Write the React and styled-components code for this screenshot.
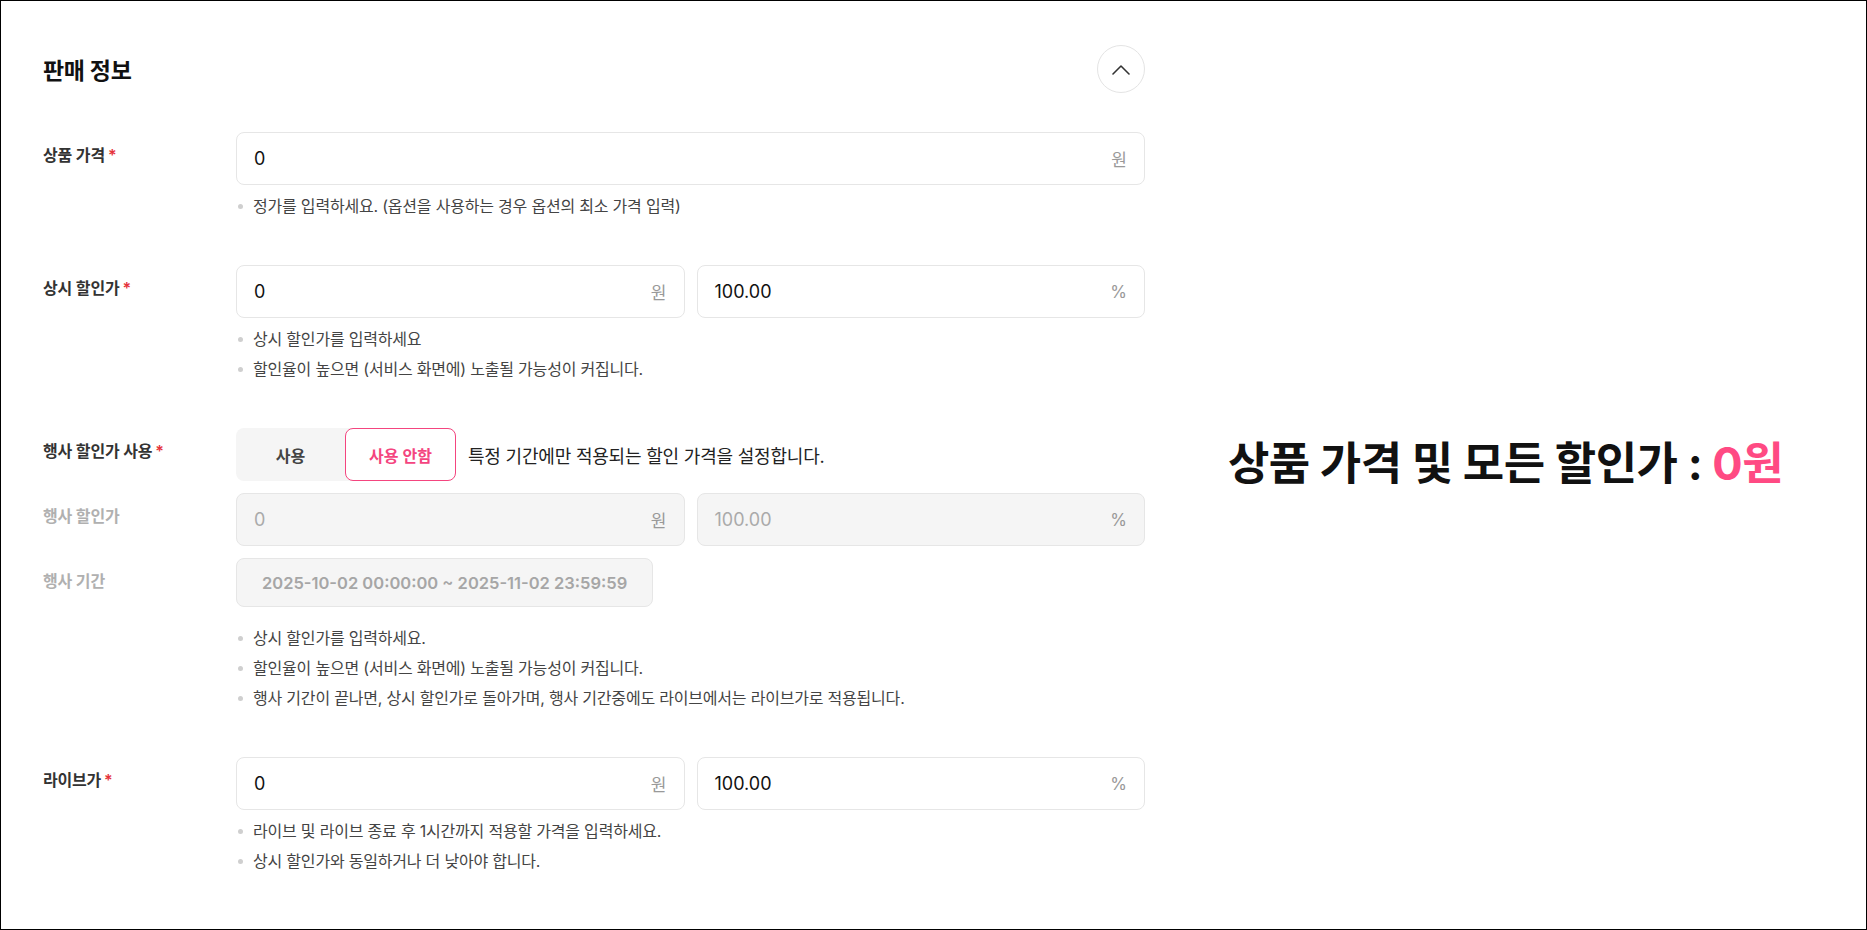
import React from "react";
import styled, { createGlobalStyle } from "styled-components";

const GlobalStyle = createGlobalStyle`
  * {
    box-sizing: border-box;
  }
  body {
    margin: 0;
    background: #fff;
    font-family: Inter, "Noto Sans CJK KR", "Noto Sans", sans-serif;
    color: #111;
  }
`;

const PINK = "#f4457f";

function ChevronUp() {
  return (
    <svg width="18" height="11" viewBox="0 0 18 11" fill="none">
      <path
        d="M1 10 L9 2 L17 10"
        stroke="#333"
        strokeWidth="1.6"
        strokeLinecap="round"
        strokeLinejoin="round"
      />
    </svg>
  );
}

function PriceInput({ value, unit, disabled }) {
  return (
    <InputBox $disabled={disabled}>
      <Value $disabled={disabled}>{value}</Value>
      <Unit>{unit}</Unit>
    </InputBox>
  );
}

function HelpText({ items, $top }) {
  return (
    <HelpList $top={$top}>
      {items.map((t) => (
        <HelpItem key={t}>
          <Dot />
          <span>{t}</span>
        </HelpItem>
      ))}
    </HelpList>
  );
}

export default function App() {
  return (
    <>
      <GlobalStyle />
      <Page>
        <FormPanel>
          <Header>
            <Title>판매 정보</Title>
            <CollapseButton type="button" aria-label="접기">
              <ChevronUp />
            </CollapseButton>
          </Header>

          <FieldRow>
            <Label>
              상품 가격<Required>*</Required>
            </Label>
            <FieldColumn>
              <PriceInput value="0" unit="원" />
              <HelpText
                items={["정가를 입력하세요. (옵션을 사용하는 경우 옵션의 최소 가격 입력)"]}
              />
            </FieldColumn>
          </FieldRow>

          <FieldRow>
            <Label>
              상시 할인가<Required>*</Required>
            </Label>
            <FieldColumn>
              <InputPair>
                <PriceInput value="0" unit="원" />
                <PriceInput value="100.00" unit="%" />
              </InputPair>
              <HelpText
                items={[
                  "상시 할인가를 입력하세요",
                  "할인율이 높으면 (서비스 화면에) 노출될 가능성이 커집니다.",
                ]}
              />
            </FieldColumn>
          </FieldRow>

          <FieldRow $tight>
            <Label>
              행사 할인가 사용<Required>*</Required>
            </Label>
            <ToggleLine>
              <SegmentGroup>
                <Segment type="button">사용</Segment>
                <Segment type="button" $active>
                  사용 안함
                </Segment>
              </SegmentGroup>
              <ToggleDesc>특정 기간에만 적용되는 할인 가격을 설정합니다.</ToggleDesc>
            </ToggleLine>
          </FieldRow>

          <FieldRow $tight>
            <Label $disabled>행사 할인가</Label>
            <InputPair>
              <PriceInput value="0" unit="원" disabled />
              <PriceInput value="100.00" unit="%" disabled />
            </InputPair>
          </FieldRow>

          <FieldRow>
            <Label $disabled>행사 기간</Label>
            <FieldColumn>
              <DateBox>2025-10-02 00:00:00 ~ 2025-11-02 23:59:59</DateBox>
              <HelpText
                $top={20}
                items={[
                  "상시 할인가를 입력하세요.",
                  "할인율이 높으면 (서비스 화면에) 노출될 가능성이 커집니다.",
                  "행사 기간이 끝나면, 상시 할인가로 돌아가며, 행사 기간중에도 라이브에서는 라이브가로 적용됩니다.",
                ]}
              />
            </FieldColumn>
          </FieldRow>

          <FieldRow>
            <Label>
              라이브가<Required>*</Required>
            </Label>
            <FieldColumn>
              <InputPair>
                <PriceInput value="0" unit="원" />
                <PriceInput value="100.00" unit="%" />
              </InputPair>
              <HelpText
                items={[
                  "라이브 및 라이브 종료 후 1시간까지 적용할 가격을 입력하세요.",
                  "상시 할인가와 동일하거나 더 낮아야 합니다.",
                ]}
              />
            </FieldColumn>
          </FieldRow>
        </FormPanel>

        <SummaryPanel>
          <Summary>
            상품 가격 및 모든 할인가 : <Accent>0원</Accent>
          </Summary>
        </SummaryPanel>
      </Page>
    </>
  );
}

const Page = styled.div`
  display: grid;
  grid-template-columns: 1144px 1fr;
  height: 100vh;
  border: 1px solid #000;
  overflow: hidden;
`;

const FormPanel = styled.section`
  padding: 44px 0 0 42px;
`;

const Header = styled.div`
  display: flex;
  align-items: center;
  justify-content: space-between;
  margin-bottom: 39px;
`;

const Title = styled.h2`
  margin: 0;
  font-size: 23px;
  font-weight: 700;
  color: #111;
  letter-spacing: -0.3px;
`;

const CollapseButton = styled.button`
  width: 48px;
  height: 48px;
  border-radius: 50%;
  border: 1px solid #e4e4e4;
  background: #fff;
  display: flex;
  align-items: center;
  justify-content: center;
  padding: 0;
  cursor: pointer;
`;

const FieldRow = styled.div`
  display: grid;
  grid-template-columns: 193px 1fr;
  margin-bottom: ${(p) => (p.$tight ? "12px" : "48px")};
`;

const Label = styled.div`
  padding-top: 12px;
  line-height: 22px;
  font-size: 16px;
  font-weight: 600;
  color: ${(p) => (p.$disabled ? "#b0b0b0" : "#333")};
  letter-spacing: -0.2px;
`;

const Required = styled.span`
  color: #e5333b;
  margin-left: 3px;
`;

const FieldColumn = styled.div`
  display: flex;
  flex-direction: column;
`;

const InputPair = styled.div`
  display: grid;
  grid-template-columns: 1fr 1fr;
  gap: 12px;
`;

const InputBox = styled.div`
  height: 53px;
  display: flex;
  align-items: center;
  justify-content: space-between;
  padding: 0 17px;
  border: 1px solid #e6e6e6;
  border-radius: 8px;
  background: ${(p) => (p.$disabled ? "#f5f5f5" : "#fff")};
`;

const Value = styled.span`
  font-size: 18px;
  color: ${(p) => (p.$disabled ? "#aaa" : "#111")};
`;

const Unit = styled.span`
  font-size: 17px;
  color: #999;
`;

const HelpList = styled.ul`
  list-style: none;
  margin: ${(p) => (p.$top ? `${p.$top}px` : "10px")} 0 0;
  padding: 0;
  display: flex;
  flex-direction: column;
  gap: 8px;
`;

const HelpItem = styled.li`
  display: flex;
  align-items: center;
  gap: 10px;
  font-size: 16px;
  line-height: 22px;
  color: #444;
  letter-spacing: -0.2px;
`;

const Dot = styled.i`
  flex: none;
  width: 5px;
  height: 5px;
  margin-left: 2px;
  border-radius: 50%;
  background: #cfcfcf;
`;

const ToggleLine = styled.div`
  display: flex;
  align-items: center;
  gap: 12px;
`;

const SegmentGroup = styled.div`
  display: flex;
  height: 53px;
  border-radius: 8px;
  background: #f5f5f5;
`;

const Segment = styled.button`
  width: ${(p) => (p.$active ? "111px" : "109px")};
  height: 100%;
  border-radius: 8px;
  border: 1px solid ${(p) => (p.$active ? PINK : "transparent")};
  background: ${(p) => (p.$active ? "#fff" : "transparent")};
  color: ${(p) => (p.$active ? PINK : "#444")};
  font-family: inherit;
  font-size: 16px;
  font-weight: 600;
  padding: 0;
  cursor: pointer;
`;

const ToggleDesc = styled.span`
  font-size: 18px;
  color: #222;
  letter-spacing: -0.2px;
`;

const DateBox = styled.div`
  align-self: flex-start;
  height: 49px;
  display: flex;
  align-items: center;
  padding: 0 25px;
  border: 1px solid #e6e6e6;
  border-radius: 8px;
  background: #f5f5f5;
  color: #a6a6a6;
  font-size: 16.5px;
  font-weight: 600;
`;

const SummaryPanel = styled.section`
  display: flex;
  align-items: center;
  justify-content: center;
  padding-bottom: 10px;
`;

const Summary = styled.p`
  margin: 0;
  font-size: 45px;
  font-weight: 700;
  color: #111;
  letter-spacing: -0.5px;
`;

const Accent = styled.span`
  color: #ff4a83;
`;
